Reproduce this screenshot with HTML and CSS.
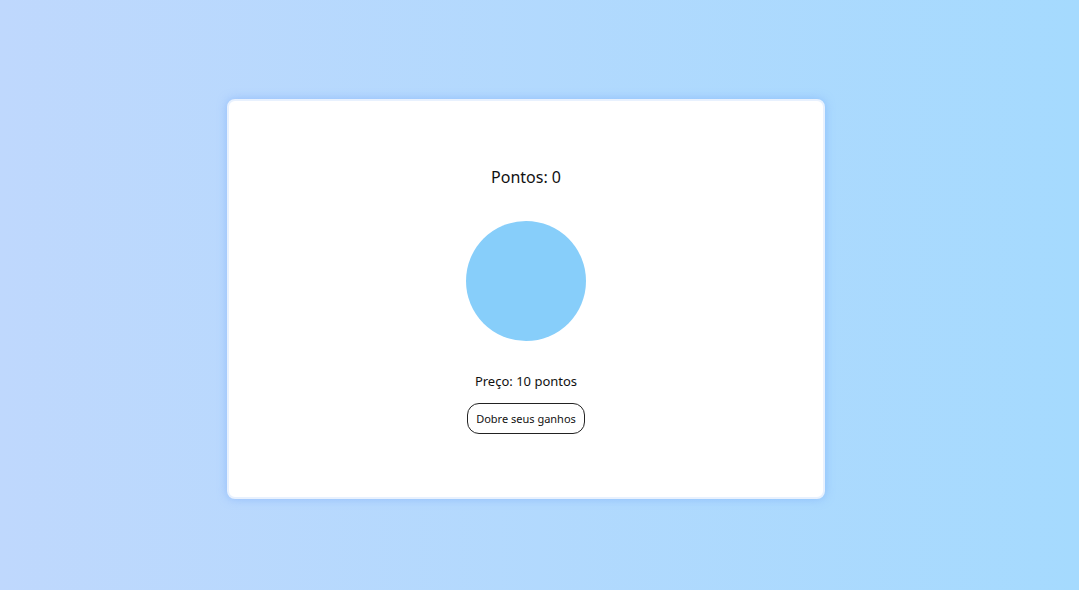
FILE: index.html
```html
<!DOCTYPE html>
<html lang="pt">
<head>
<meta charset="utf-8">
<title>Clicker</title>
<link rel="stylesheet" href="styles.css">
</head>
<body>
<main class="page">
  <section class="card">
    <p class="score">Pontos: 0</p>
    <div class="clicker"></div>
    <p class="price">Preço: 10 pontos</p>
    <button class="upgrade">Dobre seus ganhos</button>
  </section>
</main>
</body>
</html>
```
FILE: styles.css
```css
html, body {
  margin: 0;
  height: 100%;
}
body {
  background: linear-gradient(to right, #bfd8fd, #a5dafe);
  font-family: "Noto Sans", "Open Sans", sans-serif;
  color: #111;
}
.page {
  box-sizing: border-box;
  height: 100%;
  padding: 99px 0 0 227px;
}
.card {
  box-sizing: border-box;
  width: 598px;
  height: 400px;
  background: #fff;
  border: 2px solid #e8f1fe;
  border-radius: 8px;
  box-shadow: 0 0 10px rgba(120, 170, 250, 0.6);
  display: flex;
  flex-direction: column;
  align-items: center;
  justify-content: center;
}
.score {
  margin: 0 0 32px;
  font-size: 16px;
  line-height: 24px;
}
.clicker {
  width: 120px;
  height: 120px;
  border-radius: 50%;
  background: #87cefa;
}
.price {
  margin: 30px 0 12px;
  font-size: 13px;
  line-height: 20px;
}
.upgrade {
  box-sizing: border-box;
  width: 118px;
  height: 31px;
  border: 1px solid #222;
  border-radius: 12px;
  background: #fff;
  font-family: inherit;
  font-size: 11px;
  color: #111;
  padding: 0;
}
```
